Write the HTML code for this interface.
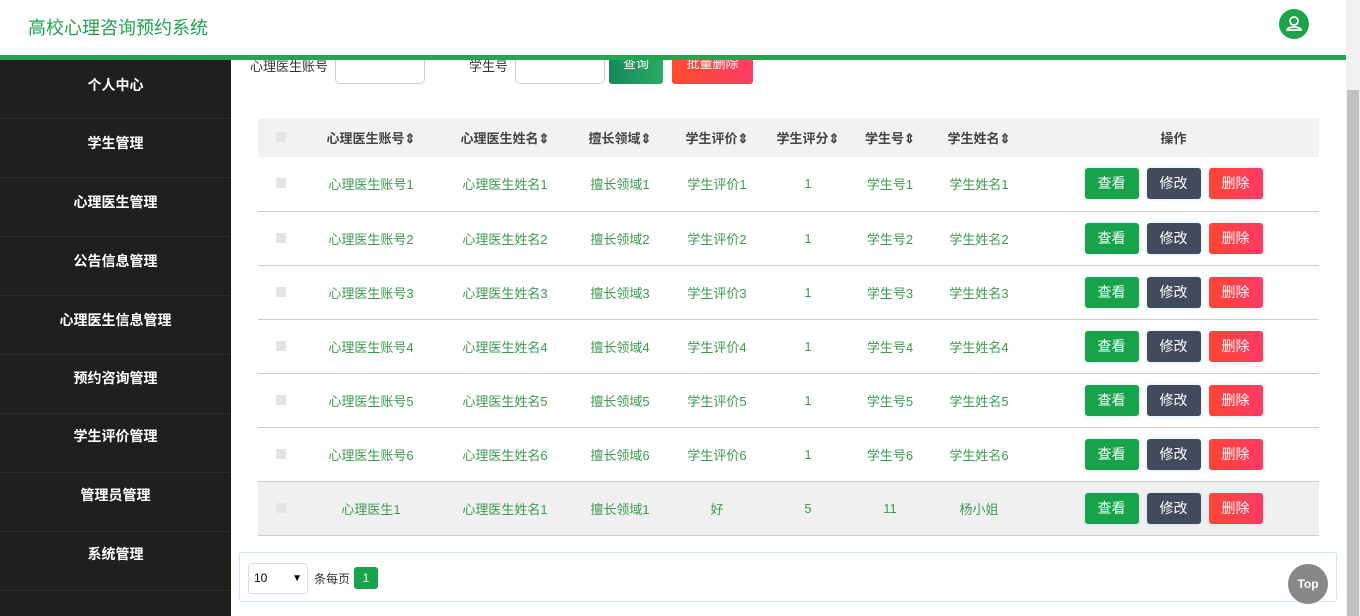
<!DOCTYPE html>
<html><head><meta charset="utf-8"><style>
*{box-sizing:border-box;margin:0;padding:0}
body{width:1360px;height:616px;overflow:hidden;background:#fff;font-family:"Liberation Sans","Noto Sans CJK SC",sans-serif;position:relative;font-size:14px}
.hdr{position:absolute;left:0;top:0;width:1346px;height:55px;background:#fff;z-index:5}
.hdr .t{position:absolute;left:28px;top:14px;font-size:18px;color:#22a24d}
.av{position:absolute;left:1279px;top:9px;width:30px;height:30px;border-radius:50%;background:#1aa54b}
.gl{position:absolute;left:0;top:55px;width:1346px;height:5px;background:#1fa84d;z-index:5}
.side{position:absolute;left:0;top:60px;width:231px;height:556px;background:#1f1f1f}
.side div{position:absolute;left:0;width:231px;height:59px;border-bottom:1px solid #2c2c2c;color:#fff;text-align:center;font-size:14px;line-height:20px;font-weight:bold}
.sb{position:absolute;left:1346px;top:0;width:14px;height:616px;background:#f1f1f1}
.sb i{position:absolute;left:1px;top:90px;width:12px;height:526px;background:#c1c1c1}
.lbl{position:absolute;top:56px;font-size:13px;color:#333}
.inp{position:absolute;top:50px;height:34px;border:1px solid #ccc;border-radius:5px;background:#fff}
.btn{position:absolute;color:#fff;text-align:center;border-radius:3px;font-size:13px}
table{position:absolute;left:258px;top:118px;width:1061px;border-collapse:collapse;font-size:13px}
th{height:39px;background:#f2f2f2;color:#444;font-weight:bold}
td{height:54px;color:#3c9a4f;text-align:center;border-bottom:1px solid #ccc}
tr.g td{background:#f0f0f0}
.cb{display:inline-block;width:10px;height:10px;background:#e4e4e4}
.b{display:inline-block;width:54px;height:31px;line-height:31px;color:#fff;border-radius:3px;margin:0 4px;box-shadow:0 0 4px #cfe3ff;font-size:14px}
.pg{position:absolute;left:239px;top:552px;width:1098px;height:50px;border:1px solid #cfe3fb;border-radius:3px}
.top{position:absolute;left:1288px;top:564px;width:40px;height:40px;border-radius:50%;background:#888;color:#fff;font-size:12px;font-weight:bold;text-align:center;line-height:40px}
</style></head><body>
<div class="hdr"><div class="t">高校心理咨询预约系统</div>
<div class="av"><svg width="30" height="30" viewBox="0 0 30 30"><circle cx="15" cy="12" r="4" fill="none" stroke="#fff" stroke-width="1.8"/><path d="M8 21c1-4 13-4 14 0z" fill="none" stroke="#fff" stroke-width="1.8"/></svg></div></div>
<div class="gl"></div>
<div class="side">
<div style="top:0;padding-top:15px">个人中心</div>
<div style="top:59px;padding-top:14px">学生管理</div>
<div style="top:118px;padding-top:14px">心理医生管理</div>
<div style="top:177px;padding-top:14px">公告信息管理</div>
<div style="top:236px;padding-top:14px">心理医生信息管理</div>
<div style="top:295px;padding-top:13px">预约咨询管理</div>
<div style="top:354px;padding-top:12px">学生评价管理</div>
<div style="top:413px;padding-top:12px">管理员管理</div>
<div style="top:472px;padding-top:12px">系统管理</div>
</div>
<div class="sb"><i></i></div>
<div class="lbl" style="left:250px">心理医生账号</div>
<div class="inp" style="left:335px;width:90px"></div>
<div class="lbl" style="left:469px">学生号</div>
<div class="inp" style="left:515px;width:90px"></div>
<div class="btn" style="left:609px;top:50px;width:54px;height:34px;line-height:28px;background:linear-gradient(90deg,#138a5a,#2aab62)">查询</div>
<div class="btn" style="left:672px;top:50px;width:81px;height:34px;line-height:28px;background:linear-gradient(90deg,#ff4a2e,#ff3d67)">批量删除</div>
<table>
<colgroup><col style="width:46px"><col style="width:134px"><col style="width:134px"><col style="width:96px"><col style="width:98px"><col style="width:84px"><col style="width:80px"><col style="width:98px"><col></colgroup>
<tr><th><span class="cb"></span></th><th>心理医生账号⇕</th><th>心理医生姓名⇕</th><th>擅长领域⇕</th><th>学生评价⇕</th><th>学生评分⇕</th><th>学生号⇕</th><th>学生姓名⇕</th><th>操作</th></tr>
<tr><td><span class="cb"></span></td><td>心理医生账号1</td><td>心理医生姓名1</td><td>擅长领域1</td><td>学生评价1</td><td>1</td><td>学生号1</td><td>学生姓名1</td><td><span class="b" style="background:#16a34a">查看</span><span class="b" style="background:#434a5c">修改</span><span class="b" style="background:linear-gradient(90deg,#ff4437,#ff3b63)">删除</span></td></tr>
<tr><td><span class="cb"></span></td><td>心理医生账号2</td><td>心理医生姓名2</td><td>擅长领域2</td><td>学生评价2</td><td>1</td><td>学生号2</td><td>学生姓名2</td><td><span class="b" style="background:#16a34a">查看</span><span class="b" style="background:#434a5c">修改</span><span class="b" style="background:linear-gradient(90deg,#ff4437,#ff3b63)">删除</span></td></tr>
<tr><td><span class="cb"></span></td><td>心理医生账号3</td><td>心理医生姓名3</td><td>擅长领域3</td><td>学生评价3</td><td>1</td><td>学生号3</td><td>学生姓名3</td><td><span class="b" style="background:#16a34a">查看</span><span class="b" style="background:#434a5c">修改</span><span class="b" style="background:linear-gradient(90deg,#ff4437,#ff3b63)">删除</span></td></tr>
<tr><td><span class="cb"></span></td><td>心理医生账号4</td><td>心理医生姓名4</td><td>擅长领域4</td><td>学生评价4</td><td>1</td><td>学生号4</td><td>学生姓名4</td><td><span class="b" style="background:#16a34a">查看</span><span class="b" style="background:#434a5c">修改</span><span class="b" style="background:linear-gradient(90deg,#ff4437,#ff3b63)">删除</span></td></tr>
<tr><td><span class="cb"></span></td><td>心理医生账号5</td><td>心理医生姓名5</td><td>擅长领域5</td><td>学生评价5</td><td>1</td><td>学生号5</td><td>学生姓名5</td><td><span class="b" style="background:#16a34a">查看</span><span class="b" style="background:#434a5c">修改</span><span class="b" style="background:linear-gradient(90deg,#ff4437,#ff3b63)">删除</span></td></tr>
<tr><td><span class="cb"></span></td><td>心理医生账号6</td><td>心理医生姓名6</td><td>擅长领域6</td><td>学生评价6</td><td>1</td><td>学生号6</td><td>学生姓名6</td><td><span class="b" style="background:#16a34a">查看</span><span class="b" style="background:#434a5c">修改</span><span class="b" style="background:linear-gradient(90deg,#ff4437,#ff3b63)">删除</span></td></tr>
<tr class="g"><td><span class="cb"></span></td><td>心理医生1</td><td>心理医生姓名1</td><td>擅长领域1</td><td>好</td><td>5</td><td>11</td><td>杨小姐</td><td><span class="b" style="background:#16a34a">查看</span><span class="b" style="background:#434a5c">修改</span><span class="b" style="background:linear-gradient(90deg,#ff4437,#ff3b63)">删除</span></td></tr>
</table>
<div class="pg">
<div style="position:absolute;left:8px;top:10px;width:60px;height:31px;border:1px solid #ddd;border-radius:3px;font-size:12px;line-height:29px;padding-left:5px">10<span style="position:absolute;right:5px;font-size:10px">▼</span></div>
<div style="position:absolute;left:74px;top:17px;font-size:12px;color:#333">条每页</div>
<div style="position:absolute;left:114px;top:14px;width:24px;height:22px;background:#16a34a;color:#fff;border-radius:3px;font-size:12px;text-align:center;line-height:22px">1</div>
</div>
<div class="top">Top</div>
</body></html>
